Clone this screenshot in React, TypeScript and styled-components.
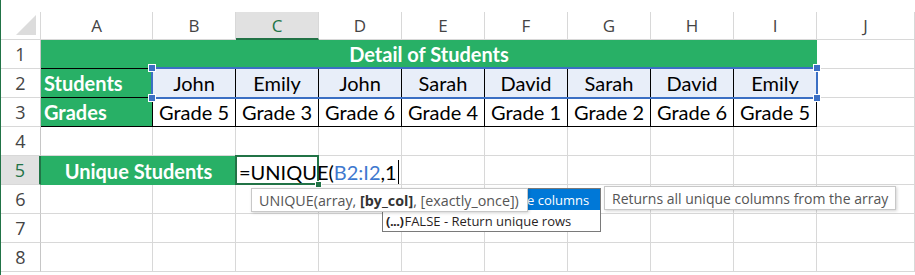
import styled, { createGlobalStyle } from "styled-components";

const GlobalStyle = createGlobalStyle`
  body {
    margin: 0;
    background: #fff;
    font-family: "Lato", "Liberation Sans", sans-serif;
  }
`;

const GREEN = "#28b066";
const DARK_GREEN = "#217346";
const GRID = "#d8d8d8";
const SEL_BLUE = "#3b6fc4";

const COLS = ["A", "B", "C", "D", "E", "F", "G", "H", "I", "J"];
const STUDENTS = ["John", "Emily", "John", "Sarah", "David", "Sarah", "David", "Emily"];
const GRADES = ["Grade 5", "Grade 3", "Grade 6", "Grade 4", "Grade 1", "Grade 2", "Grade 6", "Grade 5"];

const Sheet = styled.div`
  height: 275px;
  overflow: hidden;
  padding-top: 12px;
  box-sizing: border-box;
  border-left: 1px solid ${DARK_GREEN};
`;

const Grid = styled.div`
  display: grid;
  grid-template-columns: 40px 112px repeat(8, 83px) 98px;
  grid-template-rows: 28px repeat(8, 29px);
`;

const Corner = styled.div`
  position: relative;
  box-sizing: border-box;
  border-right: 1px solid ${GRID};
  border-bottom: 1px solid ${GRID};
  &::after {
    content: "";
    position: absolute;
    right: 4px;
    bottom: 4px;
    width: 0;
    height: 0;
    border-left: 20px solid transparent;
    border-bottom: 20px solid #dcdcdc;
  }
`;

const ColHeader = styled.div<{ $active?: boolean }>`
  box-sizing: border-box;
  display: flex;
  align-items: center;
  justify-content: center;
  font-family: "Open Sans", "Noto Sans", sans-serif;
  font-size: 17px;
  color: ${({ $active }) => ($active ? DARK_GREEN : "#444")};
  background: ${({ $active }) => ($active ? "#e1e1e1" : "#fff")};
  border-right: 1px solid ${GRID};
  border-bottom: ${({ $active }) => ($active ? `2px solid ${DARK_GREEN}` : `1px solid ${GRID}`)};
`;

const RowHeader = styled.div<{ $active?: boolean }>`
  box-sizing: border-box;
  display: flex;
  align-items: center;
  justify-content: center;
  font-family: "Open Sans", "Noto Sans", sans-serif;
  font-size: 18px;
  color: ${({ $active }) => ($active ? DARK_GREEN : "#444")};
  background: ${({ $active }) => ($active ? "#e1e1e1" : "#fff")};
  border-right: ${({ $active }) => ($active ? `2px solid ${DARK_GREEN}` : `1px solid #c6c6c6`)};
  border-bottom: 1px solid ${GRID};
`;

const Cell = styled.div`
  box-sizing: border-box;
  border-right: 1px solid ${GRID};
  border-bottom: 1px solid ${GRID};
`;

const TitleCell = styled.div`
  grid-column: span 9;
  box-sizing: border-box;
  display: flex;
  align-items: center;
  justify-content: center;
  background: ${GREEN};
  color: #fff;
  font-weight: 700;
  font-size: 20px;
  border-bottom: 1px solid #000;
`;

const LabelCell = styled.div`
  box-sizing: border-box;
  display: flex;
  align-items: center;
  padding-left: 3px;
  background: ${GREEN};
  color: #fff;
  font-weight: 700;
  font-size: 20px;
  border-right: 1px solid #000;
  border-bottom: 1px solid #000;
`;

const DataCell = styled.div<{ $tint?: boolean }>`
  box-sizing: border-box;
  display: flex;
  align-items: center;
  justify-content: center;
  font-size: 20px;
  color: #000;
  white-space: nowrap;
  background: ${({ $tint }) => ($tint ? "#e8eef9" : "#fff")};
  border-right: 1px solid #000;
  border-bottom: 1px solid #000;
`;

const Range = styled.div`
  grid-column: span 8;
  display: grid;
  grid-template-columns: repeat(8, 83px);
  position: relative;
  &::after {
    content: "";
    position: absolute;
    inset: -2px -1px -1px -2px;
    border: 2px solid ${SEL_BLUE};
    pointer-events: none;
  }
`;

const Handle = styled.span<{ $x: "left" | "right"; $y: "top" | "bottom" }>`
  position: absolute;
  z-index: 2;
  width: 6px;
  height: 6px;
  background: ${SEL_BLUE};
  border: 1px solid #fff;
  ${({ $x }) => ($x === "left" ? "left: -5px;" : "right: -4px;")}
  ${({ $y }) => ($y === "top" ? "top: -5px;" : "bottom: -4px;")}
`;

const BannerCell = styled.div`
  grid-column: span 2;
  box-sizing: border-box;
  display: flex;
  align-items: center;
  justify-content: center;
  background: ${GREEN};
  color: #fff;
  font-weight: 700;
  font-size: 20px;
`;

const ActiveCell = styled.div`
  position: relative;
  z-index: 3;
  box-sizing: border-box;
  &::before {
    content: "";
    position: absolute;
    inset: -1px 0 0 -1px;
    border: 2px solid ${DARK_GREEN};
  }
`;

const FillHandle = styled.span`
  position: absolute;
  right: -3px;
  bottom: -3px;
  width: 5px;
  height: 5px;
  background: ${DARK_GREEN};
  border: 1px solid #fff;
`;

const EditText = styled.div`
  position: absolute;
  left: 3px;
  top: 3px;
  display: flex;
  align-items: center;
  height: 26px;
  font-size: 20px;
  color: #000;
  white-space: nowrap;
`;

const Ref = styled.span`
  color: #3f79cf;
`;

const Caret = styled.span`
  display: inline-block;
  width: 1px;
  height: 24px;
  margin-left: 1px;
  background: #000;
`;

const Tip = styled.div<{ $left: number; $top: number; $width: number; $size: number }>`
  position: absolute;
  left: ${({ $left }) => $left}px;
  top: ${({ $top }) => $top}px;
  width: ${({ $width }) => $width}px;
  height: 24px;
  box-sizing: border-box;
  display: flex;
  align-items: center;
  padding-left: 7px;
  overflow: hidden;
  background: #fff;
  border: 1px solid #c8c8c8;
  box-shadow: 1px 1px 3px rgba(0, 0, 0, 0.18);
  font-family: "Open Sans", "Noto Sans", sans-serif;
  font-size: ${({ $size }) => $size}px;
  color: #555;
  white-space: pre;
  z-index: 5;
`;

const Bold = styled.b`
  color: #333;
  font-weight: 700;
`;

const Menu = styled.div`
  position: absolute;
  left: 146px;
  top: 32px;
  width: 219px;
  box-sizing: border-box;
  border: 1px solid #7a7a7a;
  background: #fff;
  z-index: 4;
  font-family: "Open Sans", "Noto Sans", sans-serif;
  font-size: 13px;
`;

const MenuItem = styled.div<{ $selected?: boolean }>`
  height: 21px;
  display: flex;
  align-items: center;
  padding-left: 3px;
  white-space: nowrap;
  background: ${({ $selected }) => ($selected ? "#0078d7" : "#fff")};
  color: ${({ $selected }) => ($selected ? "#fff" : "#2a1f1f")};
`;

const ArgIcon = styled.span`
  font-weight: 700;
  font-size: 13px;
  margin-right: 1px;
  letter-spacing: -0.5px;
`;

export default function App() {
  const blankRow = (n: number) => [
    <RowHeader key={`h${n}`}>{n}</RowHeader>,
    ...COLS.map((c) => <Cell key={`${c}${n}`} />),
  ];

  return (
    <>
      <GlobalStyle />
      <Sheet>
        <Grid>
          <Corner />
          {COLS.map((c) => (
            <ColHeader key={c} $active={c === "C"}>
              {c}
            </ColHeader>
          ))}

          <RowHeader>1</RowHeader>
          <TitleCell>Detail of Students</TitleCell>
          <Cell />

          <RowHeader>2</RowHeader>
          <LabelCell>Students</LabelCell>
          <Range>
            {STUDENTS.map((s, i) => (
              <DataCell key={i} $tint>
                {s}
              </DataCell>
            ))}
            <Handle $x="left" $y="top" />
            <Handle $x="left" $y="bottom" />
            <Handle $x="right" $y="top" />
            <Handle $x="right" $y="bottom" />
          </Range>
          <Cell />

          <RowHeader>3</RowHeader>
          <LabelCell>Grades</LabelCell>
          {GRADES.map((g, i) => (
            <DataCell key={i}>{g}</DataCell>
          ))}
          <Cell />

          {blankRow(4)}

          <RowHeader $active>5</RowHeader>
          <BannerCell>Unique Students</BannerCell>
          <ActiveCell>
            <EditText>
              =UNIQUE(<Ref>B2:I2</Ref>,1
              <Caret />
            </EditText>
            <FillHandle />
            <Menu>
              <MenuItem $selected>
                <ArgIcon>(...)</ArgIcon>TRUE - Return unique columns
              </MenuItem>
              <MenuItem>
                <ArgIcon>(...)</ArgIcon>FALSE - Return unique rows
              </MenuItem>
            </Menu>
            <Tip $left={15} $top={32} $width={277} $size={14.3}>
              {"UNIQUE(array, "}
              <Bold>[by_col]</Bold>
              {", [exactly_once])"}
            </Tip>
            <Tip $left={368} $top={30} $width={292} $size={14}>
              Returns all unique columns from the array
            </Tip>
          </ActiveCell>
          {COLS.slice(3).map((c) => (
            <Cell key={`${c}5`} />
          ))}

          {blankRow(6)}
          {blankRow(7)}
          {blankRow(8)}
        </Grid>
      </Sheet>
    </>
  );
}
